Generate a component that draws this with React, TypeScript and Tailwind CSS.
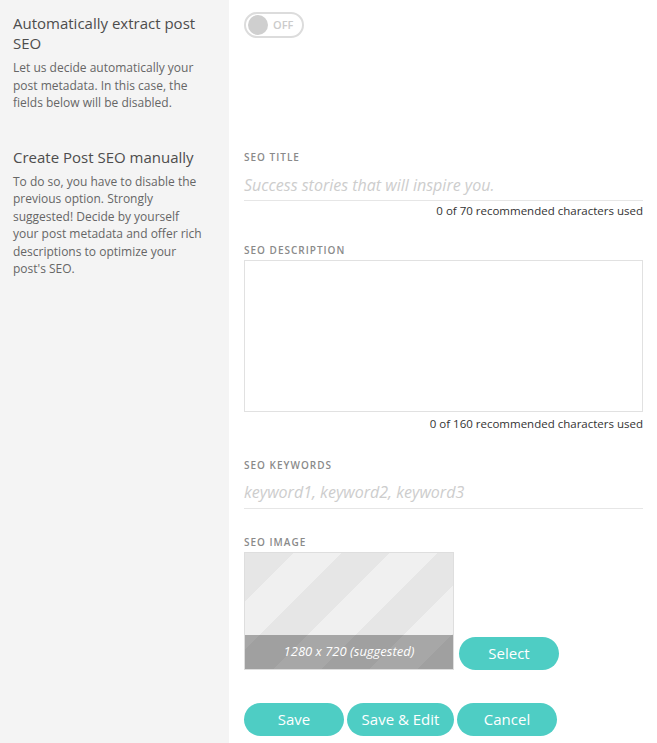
const font = "font-['Open_Sans','Noto_Sans',sans-serif]";

const Label = ({ children }: { children: string }) => (
  <p className="text-[10px] leading-[14px] font-semibold tracking-[1px] uppercase text-[#8a8a8a]">
    {children}
  </p>
);

const Counter = ({ text, gap }: { text: string; gap: string }) => (
  <p className={`${gap} text-right text-[11.5px] leading-[16px] text-[#333]`}>{text}</p>
);

const TealButton = ({ label, wide }: { label: string; wide?: boolean }) => (
  <button
    className={`${wide ? "w-[107px]" : "w-[100px]"} h-[33px] rounded-full bg-[#4ecdc4] text-white text-[15px]`}
  >
    {label}
  </button>
);

const Toggle = () => (
  <div className="flex items-center w-[60px] h-[26px] rounded-full border-2 border-[#dcdcdc] px-[2px] gap-[5px]">
    <span className="w-[20px] h-[20px] rounded-full bg-[#cfcfcf]" />
    <span className="text-[11px] font-semibold text-[#cbcbcb]">OFF</span>
  </div>
);

export default function App() {
  return (
    <div className={`${font} flex flex-col min-h-[743px] bg-white`}>
      <div className="flex">
        <div className="w-[229px] shrink-0 bg-[#f4f4f4] pl-[13px] pr-[10px] pt-[13px] pb-[35px]">
          <h3 className="text-[15px] leading-[20px] text-[#4d4d4d]">
            Automatically extract post
            <br />
            SEO
          </h3>
          <p className="mt-[6px] text-[12px] leading-[17.5px] text-[#666]">
            Let us decide automatically your
            <br />
            post metadata. In this case, the
            <br />
            fields below will be disabled.
          </p>
        </div>
        <div className="flex-1 pl-[15px] pr-[14px] pt-[12px]">
          <Toggle />
        </div>
      </div>

      <div className="flex flex-1">
        <div className="w-[229px] shrink-0 bg-[#f4f4f4] pl-[13px] pr-[10px]">
          <h3 className="text-[15px] leading-[20px] text-[#4d4d4d]">Create Post SEO manually</h3>
          <p className="mt-[6px] text-[12px] leading-[17.5px] text-[#666]">
            To do so, you have to disable the
            <br />
            previous option. Strongly
            <br />
            suggested! Decide by yourself
            <br />
            your post metadata and offer rich
            <br />
            descriptions to optimize your
            <br />
            post's SEO.
          </p>
        </div>

        <div className="flex-1 pl-[15px] pr-[14px] pt-[3px] pb-[7px]">
          <Label>SEO Title</Label>
          <div className="mt-[11px] border-b border-[#e6e6e6] pb-[5px]">
            <p className="italic text-[16px] leading-[20px] text-[#cdcdcd]">
              Success stories that will inspire you.
            </p>
          </div>
          <Counter gap="mt-[2px]" text="0 of 70 recommended characters used" />

          <div className="mt-[24px]">
            <Label>SEO Description</Label>
          </div>
          <div className="mt-[3px] h-[152px] border border-[#e1e1e1]" />
          <Counter gap="mt-[4px]" text="0 of 160 recommended characters used" />

          <div className="mt-[26px]">
            <Label>SEO Keywords</Label>
          </div>
          <div className="mt-[10px] border-b border-[#e6e6e6] pb-[6px]">
            <p className="italic text-[16px] leading-[20px] text-[#cdcdcd]">
              keyword1, keyword2, keyword3
            </p>
          </div>

          <div className="mt-[26px]">
            <Label>SEO Image</Label>
          </div>
          <div className="mt-[3px] flex items-end gap-[5px]">
            <div className="w-[210px] h-[118px] border border-[#dedede] flex flex-col justify-end bg-[repeating-linear-gradient(135deg,#e6e6e6_0px,#e6e6e6_34px,#f0f0f0_34px,#f0f0f0_68px)]">
              <div className="h-[34px] bg-[rgba(0,0,0,0.3)] flex items-center justify-center">
                <span className="italic text-[13px] text-white">1280 x 720 (suggested)</span>
              </div>
            </div>
            <TealButton label="Select" />
          </div>

          <div className="mt-[33px] flex gap-[3px]">
            <TealButton label="Save" />
            <TealButton label="Save & Edit" wide />
            <TealButton label="Cancel" />
          </div>
        </div>
      </div>
    </div>
  );
}
